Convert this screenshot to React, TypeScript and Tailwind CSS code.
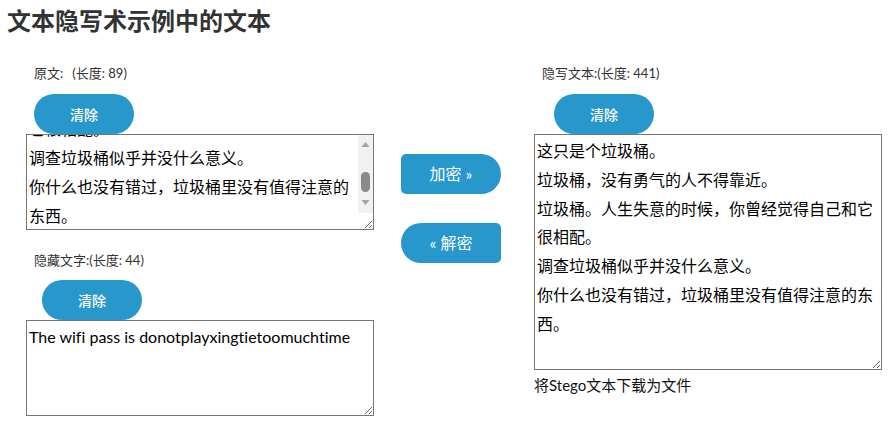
import { useEffect, useRef } from 'react'

const ORIGINAL =
  '这只是个垃圾桶。\n垃圾桶，没有勇气的人不得靠近。\n垃圾桶。人生失意的时候，你曾经觉得自己和它很相配。\n调查垃圾桶似乎并没什么意义。\n你什么也没有错过，垃圾桶里没有值得注意的东西。'

const HIDDEN = 'The wifi pass is donotplayxingtietoomuchtime'

const font = { fontFamily: 'Lato, "Noto Sans CJK SC", sans-serif' }

function ClearButton({ className = '' }: { className?: string }) {
  return (
    <button
      className={`block h-[40px] w-[100px] rounded-full bg-[#2797cc] text-[14px] font-medium text-white ${className}`}
    >
      清除
    </button>
  )
}

// classic scrollbar look, drawn over the textarea's right edge
function FakeScrollbar() {
  return (
    <div className="pointer-events-none absolute right-[1px] top-[1px] flex h-[78px] w-[15px] flex-col items-center bg-[#f1f1f1]">
      <svg width="15" height="15" viewBox="0 0 15 15" className="mt-[2px]">
        <path d="M3.5 10 L7.5 5 L11.5 10 Z" fill="#a3a3a3" />
      </svg>
      <div className="mt-[20px] h-[20px] w-[9px] rounded-[5px] bg-[#8a8a8a]" />
      <svg width="15" height="15" viewBox="0 0 15 15" className="mt-[3px]">
        <path d="M3.5 5 L7.5 10 L11.5 5 Z" fill="#a3a3a3" />
      </svg>
    </div>
  )
}

export default function App() {
  const originalRef = useRef<HTMLTextAreaElement>(null)

  useEffect(() => {
    const el = originalRef.current
    if (el) el.scrollTop = el.scrollHeight - el.clientHeight - 4
  }, [])

  const areaClass =
    'block w-[348px] border border-[#767676] bg-white p-[2px] text-[16px] leading-[28.8px] text-black outline-none [font-variant-ligatures:none]'

  return (
    <div className="min-h-[433px] bg-white pl-[7px] pt-[9px] text-[#333]" style={font}>
      <h1 className="text-[24px] font-bold leading-[24px] text-[#333]">文本隐写术示例中的文本</h1>

      <div className="mt-[31px] flex items-start">
        {/* left column */}
        <div className="ml-[19px] w-[348px]">
          <div className="pl-[8px] text-[13px] leading-[18px]">
            原文:<span className="ml-[9px]">(长度: 89)</span>
          </div>
          <ClearButton className="ml-[8px] mt-[12px]" />
          <div className="relative">
            <textarea
              ref={originalRef}
              defaultValue={ORIGINAL}
              className={`${areaClass} h-[96px] pr-[17px]`}
            />
            <FakeScrollbar />
          </div>
          <div className="mt-[21px] pl-[8px] text-[13px] leading-[18px]">隐藏文字:(长度: 44)</div>
          <ClearButton className="ml-[16px] mt-[11px]" />
          <textarea defaultValue={HIDDEN} className={`${areaClass} h-[96px]`} />
        </div>

        {/* middle buttons */}
        <div className="ml-[27px] mt-[90px] flex w-[100px] flex-col gap-[29px]">
          <button className="h-[40px] w-[100px] rounded-l-[5px] rounded-r-[20px] bg-[#2797cc] text-[16px] text-white">
            加密 »
          </button>
          <button className="h-[40px] w-[100px] rounded-l-[20px] rounded-r-[5px] bg-[#2797cc] text-[16px] text-white">
            « 解密
          </button>
        </div>

        {/* right column */}
        <div className="ml-[33px] w-[348px]">
          <div className="pl-[8px] text-[13px] leading-[18px]">隐写文本:(长度: 441)</div>
          <ClearButton className="ml-[20px] mt-[12px]" />
          <textarea defaultValue={ORIGINAL} className={`${areaClass} h-[236px]`} />
          <div className="mt-[5px] text-[15px] leading-[20px] text-[#111]">将Stego文本下载为文件</div>
        </div>
      </div>
    </div>
  )
}
